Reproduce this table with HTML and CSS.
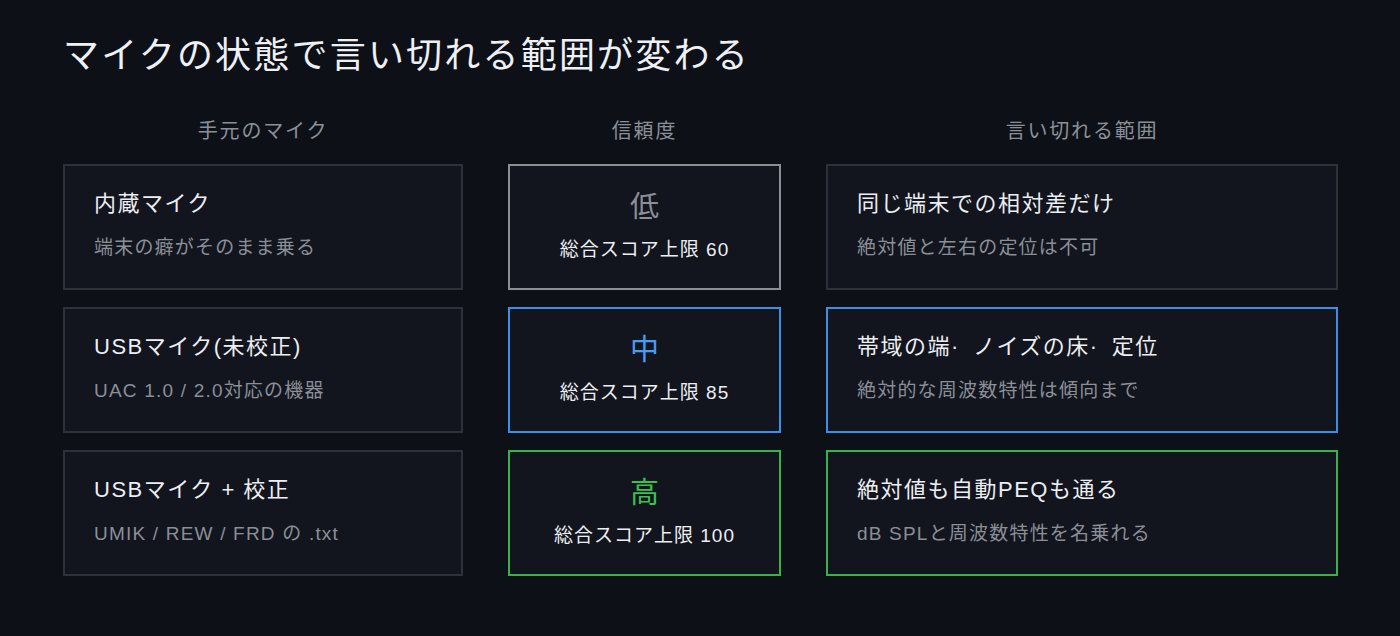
FILE: index.html
```html
<!DOCTYPE html>
<html lang="ja">
<head>
    <meta charset="UTF-8">
    <meta name="viewport" content="width=device-width, initial-scale=1.0">
    <title>マイクの状態で言い切れる範囲が変わる</title>
    <link rel="stylesheet" href="styles.css">
</head>
<body>
    <main class="slide">
        <h1 class="title">マイクの状態で言い切れる範囲が変わる</h1>

        <div class="table">
            <div class="head">手元のマイク</div>
            <div class="head">信頼度</div>
            <div class="head">言い切れる範囲</div>

            <!-- 内蔵 -->
            <div class="card">
                <div class="card-title">内蔵マイク</div>
                <div class="card-sub">端末の癖がそのまま乗る</div>
            </div>
            <div class="card level low">
                <div class="level-mark">低</div>
                <div class="level-cap">総合スコア上限 60</div>
            </div>
            <div class="card">
                <div class="card-title">同じ端末での相対差だけ</div>
                <div class="card-sub">絶対値と左右の定位は不可</div>
            </div>

            <!-- USB 未校正 -->
            <div class="card">
                <div class="card-title">USBマイク(未校正)</div>
                <div class="card-sub">UAC 1.0 / 2.0対応の機器</div>
            </div>
            <div class="card level mid">
                <div class="level-mark">中</div>
                <div class="level-cap">総合スコア上限 85</div>
            </div>
            <div class="card mid">
                <div class="card-title">帯域の端<span class="dot">·</span>ノイズの床<span class="dot">·</span>定位</div>
                <div class="card-sub">絶対的な周波数特性は傾向まで</div>
            </div>

            <!-- USB + 校正 -->
            <div class="card">
                <div class="card-title">USBマイク + 校正</div>
                <div class="card-sub">UMIK / REW / FRD の .txt</div>
            </div>
            <div class="card level high">
                <div class="level-mark">高</div>
                <div class="level-cap">総合スコア上限 100</div>
            </div>
            <div class="card high">
                <div class="card-title">絶対値も自動PEQも通る</div>
                <div class="card-sub">dB SPLと周波数特性を名乗れる</div>
            </div>
        </div>
    </main>
</body>
</html>
```

FILE: styles.css
```css
body {
    margin: 0;
    background: #0d1017;
    color: #e9ebef;
    font-family: "Liberation Sans", "Noto Sans CJK JP", sans-serif;
}
.slide {
    padding: 34px 62px 0 63px;
}
.title {
    margin: 0 0 43px;
    font-size: 36px;
    font-weight: 400;
    line-height: 1.2;
    letter-spacing: 2.2px;
    color: #eef0f4;
}
.table {
    display: grid;
    grid-template-columns: 400px 273px 512px;
    grid-template-rows: 27px;
    grid-auto-rows: 126px;
    column-gap: 45px;
    row-gap: 17px;
}
.table .head {
    margin-bottom: 2px;
    text-align: center;
    font-size: 20px;
    line-height: 27px;
    letter-spacing: 1.8px;
    color: #8b9098;
    align-self: end;
}
.card {
    box-sizing: border-box;
    background: #12151d;
    border: 2px solid #2d3139;
    padding: 22px 29px 0;
}
.card-title {
    font-size: 22px;
    line-height: 31px;
    letter-spacing: 1.5px;
    color: #eceef2;
}
.dot {
    display: inline-block;
    width: 22px;
    text-align: left;
}
.card-sub {
    margin-top: 16px;
    font-size: 19px;
    line-height: 25px;
    letter-spacing: 1.2px;
    color: #8a8f98;
}
.level {
    padding: 22px 0 0;
    text-align: center;
}
.level-mark {
    font-size: 29px;
    line-height: 38px;
}
.level-cap {
    margin-top: 11px;
    font-size: 19px;
    line-height: 25px;
    letter-spacing: 1px;
    color: #eceef2;
}
.low { border-color: #8a8f96; }
.low .level-mark { color: #8b9098; }
.mid { border-color: #3d8fe6; }
.mid .level-mark { color: #4a9cf2; }
.high { border-color: #37b34a; }
.high .level-mark { color: #3fbf52; }
```
